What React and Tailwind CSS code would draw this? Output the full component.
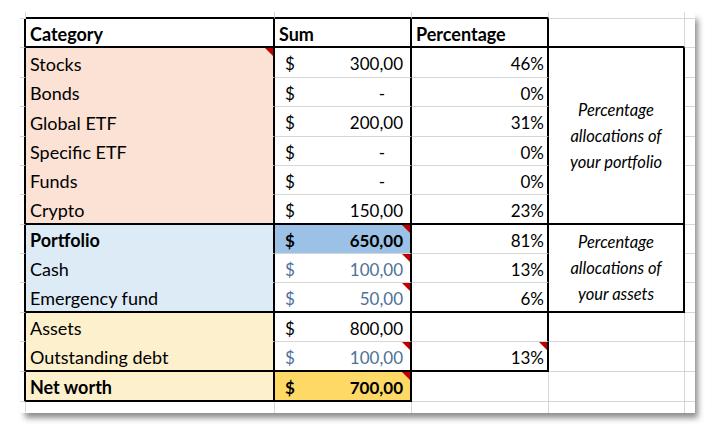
import React from 'react';

const GRAY = 'border-[#d6d6d6]';

function Flag() {
  return (
    <div className="absolute top-0 right-0 w-[8px] h-[8px] bg-[#c00000] [clip-path:polygon(0_0,100%_0,100%_100%)]" />
  );
}

function Cell({ className = '', children, flag }) {
  return (
    <div className={`relative flex items-center box-border border-r border-b ${GRAY} ${className}`}>
      {children}
      {flag && <Flag />}
    </div>
  );
}

function Money({ value, bold, blue }) {
  const color = blue ? 'text-[#4e7197]' : 'text-black';
  return (
    <div className={`flex w-full justify-between pl-[10px] pr-[7px] pt-[2px] ${color} ${bold ? 'font-bold' : ''}`}>
      <span>$</span>
      {value === '-' ? <span className="mr-[18px]">-</span> : <span>{value}</span>}
    </div>
  );
}

const Pct = ({ v }) => <div className="w-full text-right pr-[3px] pt-[2px]">{v}</div>;
const Label = ({ children, bold }) => (
  <div className={`pl-[4px] pt-[2px] text-[18px] ${bold ? 'font-bold' : ''}`}>{children}</div>
);

function Note({ lines }) {
  return (
    <div className="w-full text-center italic text-[16.5px] leading-[26px] text-black">
      {lines.map((l) => (
        <div key={l}>{l}</div>
      ))}
    </div>
  );
}

const stubL = `border-r-2 border-r-black`;
const stubR = `border-r-0`;

const portfolio = [
  ['Stocks', '300,00', '46%'],
  ['Bonds', '-', '0%'],
  ['Global ETF', '200,00', '31%'],
  ['Specific ETF', '-', '0%'],
  ['Funds', '-', '0%'],
  ['Crypto', '150,00', '23%'],
];

export default function App() {
  return (
    <div className="w-[720px] h-[440px] bg-white pl-[20px] pt-[12px] font-[Lato,sans-serif] text-[17px] leading-none text-black">
      <div
        className="grid w-[675px] bg-white shadow-[4px_6px_6px_-1px_rgba(0,0,0,0.45)]
          grid-cols-[6px_249px_137px_137px_136px_10px]
          grid-rows-[7px_29px_30px_29px_30px_29px_29px_30px_29px_29px_30px_29px_30px_30px_11px]"
      >
        {/* top stub row */}
        <Cell />
        <Cell className="border-b-2 border-b-black" />
        <Cell className="border-b-2 border-b-black" />
        <Cell className="border-b-2 border-b-black" />
        <Cell />
        <Cell className={stubR} />

        {/* header */}
        <Cell className={stubL} />
        <Cell className="border-r-2 border-r-black border-b-2 border-b-black">
          <Label bold>Category</Label>
        </Cell>
        <Cell className="border-r-2 border-r-black border-b-2 border-b-black">
          <Label bold>Sum</Label>
        </Cell>
        <Cell className="border-r-2 border-r-black border-b-2 border-b-black">
          <Label bold>Percentage</Label>
        </Cell>
        <Cell className="border-b-2 border-b-black" />
        <Cell className={stubR} />

        {/* portfolio rows */}
        {portfolio.map(([label, sum, pct], i) => {
          const last = i === portfolio.length - 1;
          return (
            <React.Fragment key={label}>
              <Cell className={stubL} />
              <Cell
                flag={i === 0}
                className={`bg-[#fbe2d5] border-r-2 border-r-black ${last ? 'border-b-2 border-b-black' : 'border-b-[#fbe2d5]'}`}
              >
                <Label>{label}</Label>
              </Cell>
              <Cell className={`border-r-2 border-r-black ${last ? 'border-b-2 border-b-black' : ''}`}>
                <Money value={sum} />
              </Cell>
              <Cell className={`border-r-2 border-r-black ${last ? 'border-b-2 border-b-black' : ''}`}>
                <Pct v={pct} />
              </Cell>
              {i === 0 && (
                <Cell className="row-span-6 border-r-2 border-r-black border-b-2 border-b-black">
                  <Note lines={['Percentage', 'allocations of', 'your portfolio']} />
                </Cell>
              )}
              <Cell className={stubR} />
            </React.Fragment>
          );
        })}

        {/* Portfolio total */}
        <Cell className={stubL} />
        <Cell className="bg-[#ddebf7] border-r-2 border-r-black border-b-[#ddebf7]">
          <Label bold>Portfolio</Label>
        </Cell>
        <Cell flag className="bg-[#9bc2e6] border-r-2 border-r-black">
          <Money value="650,00" bold />
        </Cell>
        <Cell className="border-r-2 border-r-black">
          <Pct v="81%" />
        </Cell>
        <Cell className="row-span-3 border-r-2 border-r-black border-b-2 border-b-black">
          <Note lines={['Percentage', 'allocations of', 'your assets']} />
        </Cell>
        <Cell className={stubR} />

        {/* Cash */}
        <Cell className={stubL} />
        <Cell className="bg-[#ddebf7] border-r-2 border-r-black border-b-[#ddebf7]">
          <Label>Cash</Label>
        </Cell>
        <Cell flag className="border-r-2 border-r-black">
          <Money value="100,00" blue />
        </Cell>
        <Cell className="border-r-2 border-r-black">
          <Pct v="13%" />
        </Cell>
        <Cell className={stubR} />

        {/* Emergency fund */}
        <Cell className={stubL} />
        <Cell className="bg-[#ddebf7] border-r-2 border-r-black border-b-2 border-b-black">
          <Label>Emergency fund</Label>
        </Cell>
        <Cell flag className="border-r-2 border-r-black border-b-2 border-b-black">
          <Money value="50,00" blue />
        </Cell>
        <Cell className="border-r-2 border-r-black border-b-2 border-b-black">
          <Pct v="6%" />
        </Cell>
        <Cell className={stubR} />

        {/* Assets */}
        <Cell className={stubL} />
        <Cell className="bg-[#fdf0cd] border-r-2 border-r-black border-b-[#fdf0cd]">
          <Label>Assets</Label>
        </Cell>
        <Cell className="border-r-2 border-r-black">
          <Money value="800,00" />
        </Cell>
        <Cell className="border-r-2 border-r-black" />
        <Cell />
        <Cell className={stubR} />

        {/* Outstanding debt */}
        <Cell className={stubL} />
        <Cell className="bg-[#fdf0cd] border-r-2 border-r-black border-b-2 border-b-black">
          <Label>Outstanding debt</Label>
        </Cell>
        <Cell flag className="border-r-2 border-r-black border-b-2 border-b-black">
          <Money value="100,00" blue />
        </Cell>
        <Cell flag className="border-r-2 border-r-black border-b-2 border-b-black">
          <Pct v="13%" />
        </Cell>
        <Cell />
        <Cell className={stubR} />

        {/* Net worth */}
        <Cell className={stubL} />
        <Cell className="bg-[#fdf0cd] border-r-2 border-r-black border-b-2 border-b-black">
          <Label bold>Net worth</Label>
        </Cell>
        <Cell flag className="bg-[#ffd966] border-r-2 border-r-black border-b-2 border-b-black">
          <Money value="700,00" bold />
        </Cell>
        <Cell />
        <Cell />
        <Cell className={stubR} />

        {/* bottom stub row */}
        <Cell className="border-b-0" />
        <Cell className="border-b-0" />
        <Cell className="border-b-0" />
        <Cell className="border-b-0" />
        <Cell className="border-b-0" />
        <Cell className="border-b-0 border-r-0" />
      </div>
    </div>
  );
}
